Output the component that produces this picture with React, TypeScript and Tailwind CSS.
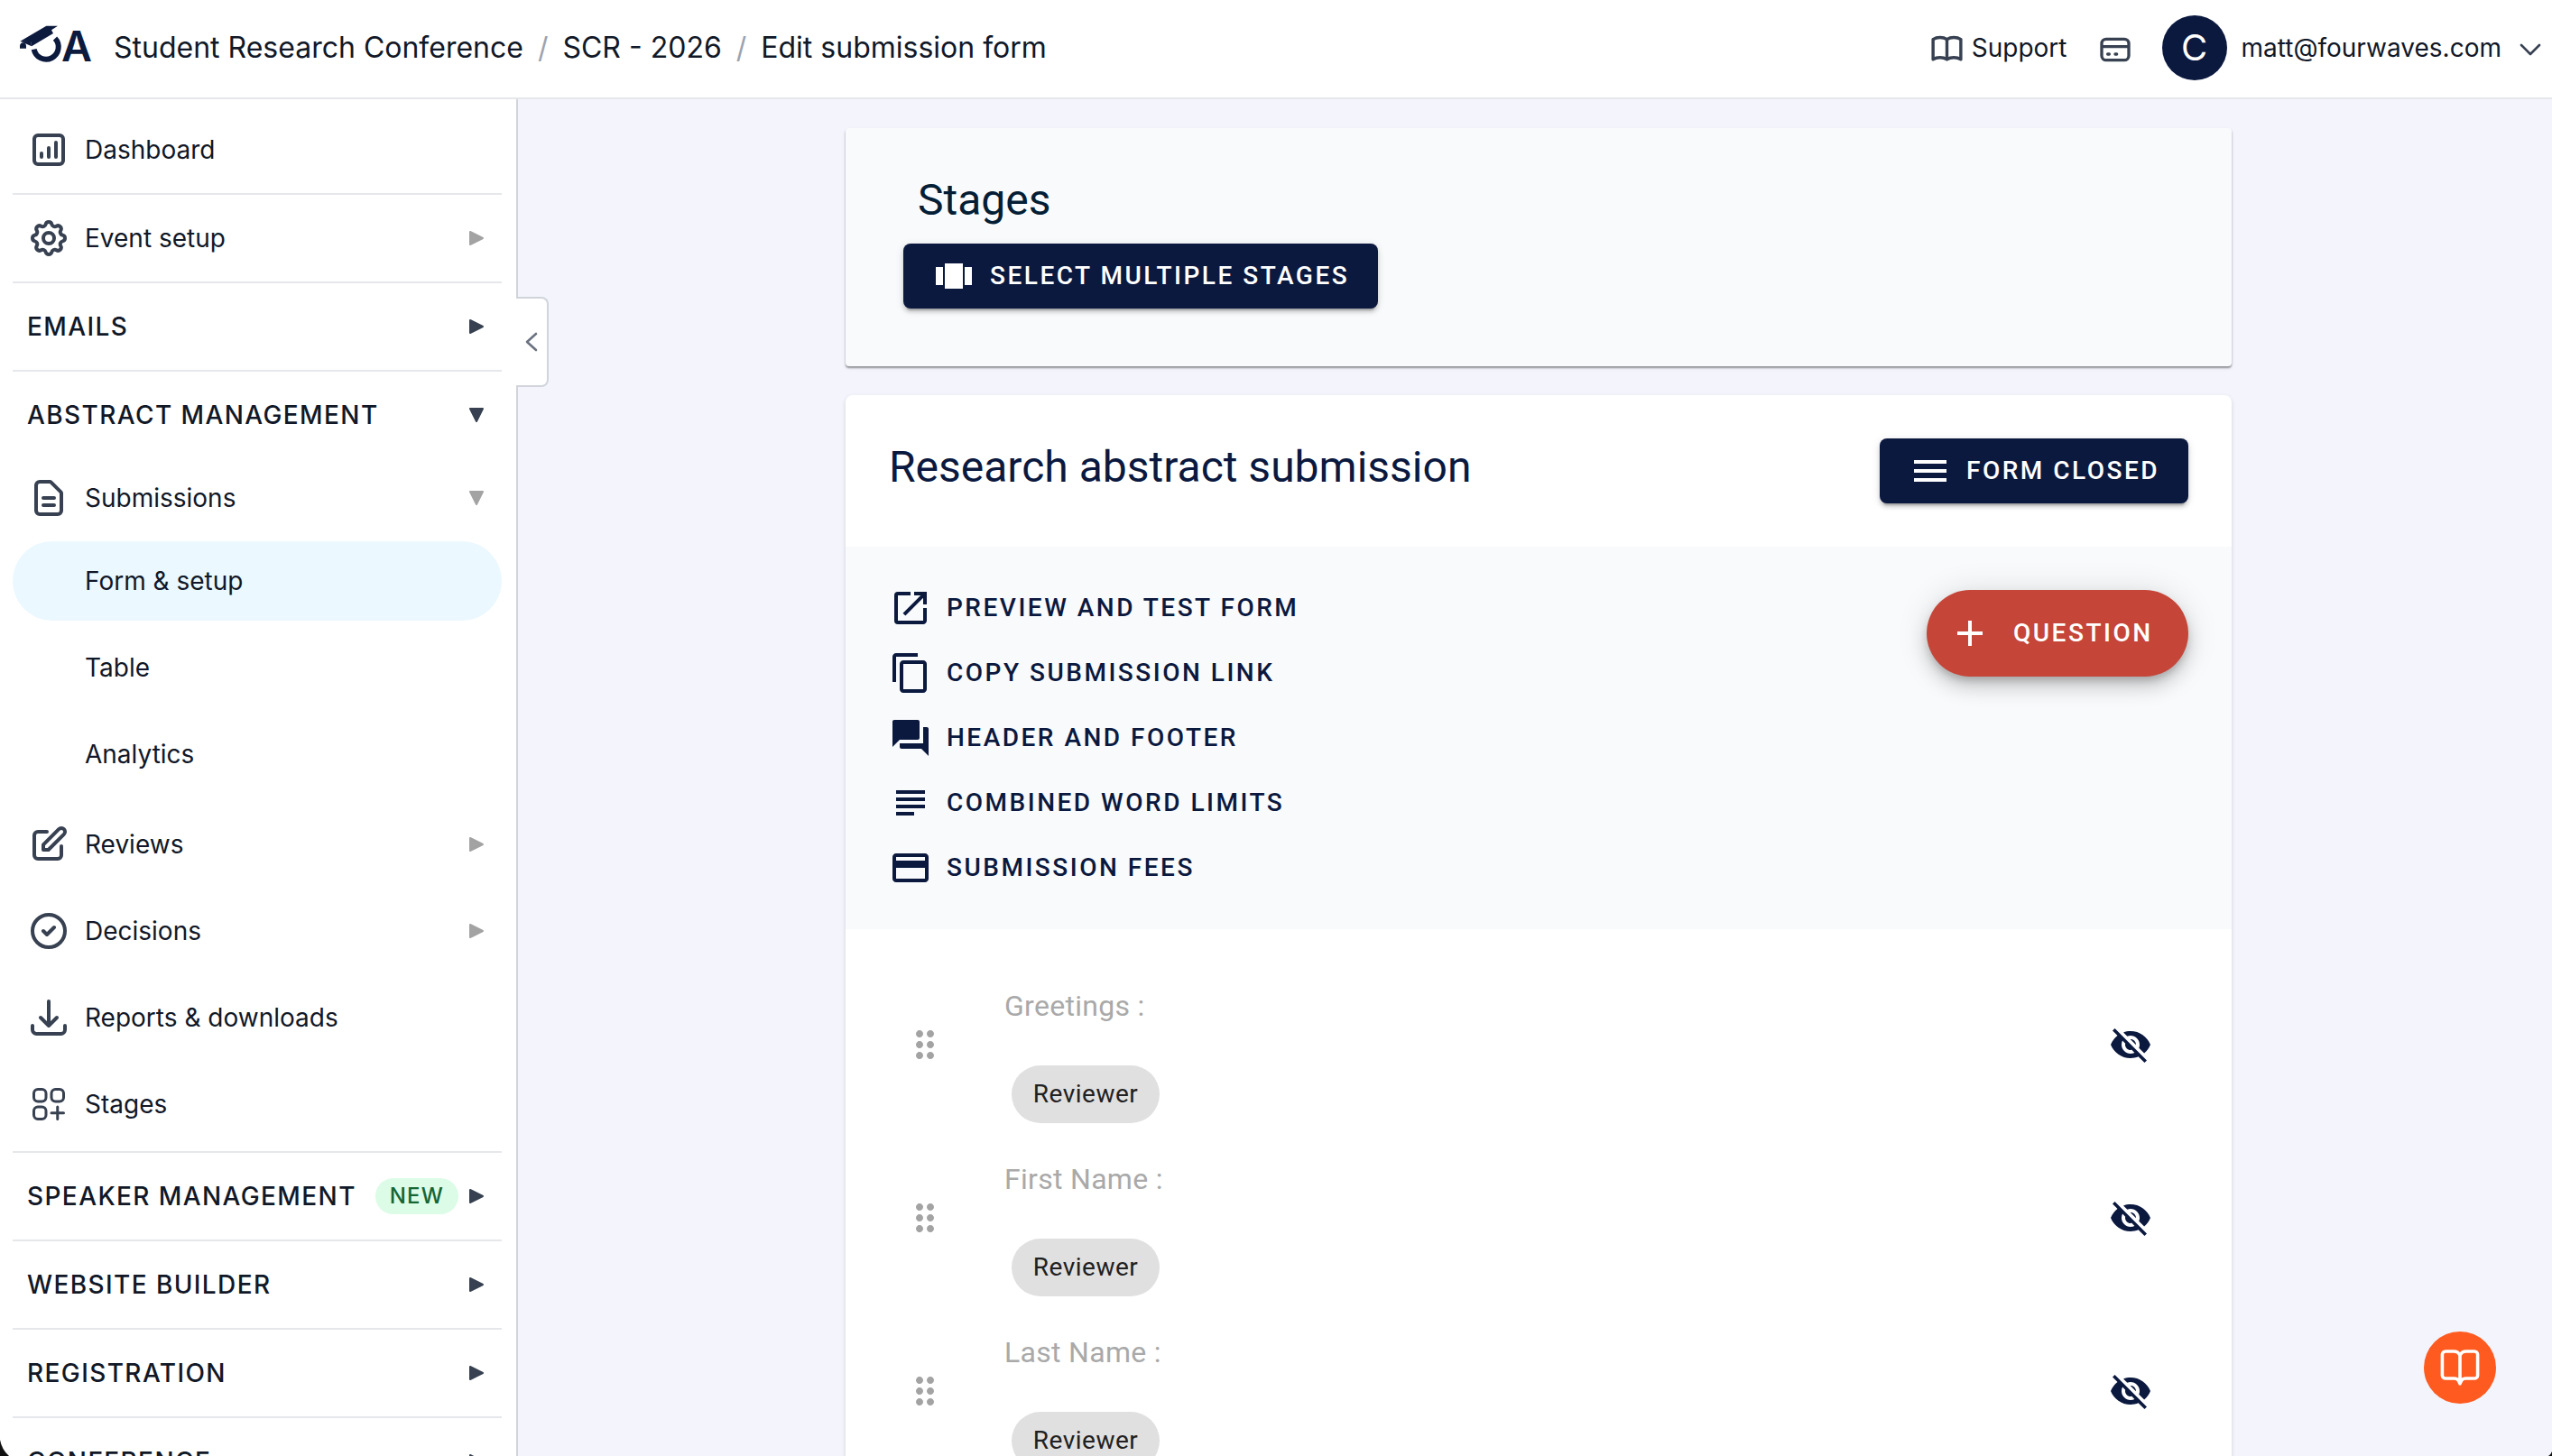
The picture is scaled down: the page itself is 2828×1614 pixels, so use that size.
import type { ReactNode } from "react";
import {
  MdAdd,
  MdContentCopy,
  MdDragIndicator,
  MdForum,
  MdMenu,
  MdOpenInNew,
  MdSubject,
  MdViewCarousel,
  MdVisibilityOff,
} from "react-icons/md";

const icons = {
  dashboard:
    "M16 8v8m-4-5v5m-4-2v2m-2 4h12a2 2 0 002-2V6a2 2 0 00-2-2H6a2 2 0 00-2 2v12a2 2 0 002 2z",
  gear: "M10.325 4.317c.426-1.756 2.924-1.756 3.35 0a1.724 1.724 0 002.573 1.066c1.543-.94 3.31.826 2.37 2.37a1.724 1.724 0 001.065 2.572c1.756.426 1.756 2.924 0 3.35a1.724 1.724 0 00-1.066 2.573c.94 1.543-.826 3.31-2.37 2.37a1.724 1.724 0 00-2.572 1.065c-.426 1.756-2.924 1.756-3.35 0a1.724 1.724 0 00-2.573-1.066c-1.543.94-3.31-.826-2.37-2.37a1.724 1.724 0 00-1.065-2.572c-1.756-.426-1.756-2.924 0-3.35a1.724 1.724 0 001.066-2.573c-.94-1.543.826-3.31 2.37-2.37.996.608 2.296.07 2.572-1.065zM15 12a3 3 0 11-6 0 3 3 0 016 0z",
  document:
    "M9 12h6m-6 4h6m2 5H7a2 2 0 01-2-2V5a2 2 0 012-2h5.586a1 1 0 01.707.293l5.414 5.414a1 1 0 01.293.707V19a2 2 0 01-2 2z",
  pencil:
    "M11 5H6a2 2 0 00-2 2v11a2 2 0 002 2h11a2 2 0 002-2v-5m-1.414-9.414a2 2 0 112.828 2.828L11.828 15H9v-2.828l8.586-8.586z",
  check: "M9 12l2 2 4-4m6 2a9 9 0 11-18 0 9 9 0 0118 0z",
  download:
    "M3 16.5v2.25A2.25 2.25 0 005.25 21h13.5A2.25 2.25 0 0021 18.75V16.5M16.5 12L12 16.5m0 0L7.5 12m4.5 4.5V3",
  stages:
    "M13.5 16.875h3.375m0 0h3.375m-3.375 0V13.5m0 3.375v3.375M6 10.5h2.25a2.25 2.25 0 002.25-2.25V6a2.25 2.25 0 00-2.25-2.25H6A2.25 2.25 0 003.75 6v2.25A2.25 2.25 0 006 10.5zm0 9.75h2.25A2.25 2.25 0 0010.5 18v-2.25a2.25 2.25 0 00-2.25-2.25H6a2.25 2.25 0 00-2.25 2.25V18A2.25 2.25 0 006 20.25zm9.75-9.75H18a2.25 2.25 0 002.25-2.25V6A2.25 2.25 0 0018 3.75h-2.25A2.25 2.25 0 0013.5 6v2.25a2.25 2.25 0 002.25 2.25z",
  book: "M12 6.253v13m0-13C10.832 5.477 9.246 5 7.5 5S4.168 5.477 3 6.253v13C4.168 18.477 5.754 18 7.5 18s3.332.477 4.5 1.253m0-13C13.168 5.477 14.754 5 16.5 5c1.747 0 3.332.477 4.5 1.253v13C19.832 18.477 18.247 18 16.5 18c-1.746 0-3.332.477-4.5 1.253",
  card: "M3 10h18M7 15h1m4 0h1m-7 4h12a3 3 0 003-3V8a3 3 0 00-3-3H6a3 3 0 00-3 3v8a3 3 0 003 3z",
};

function StrokeIcon({ d, size = 48, width = 2, className = "" }: { d: string; size?: number; width?: number; className?: string }) {
  return (
    <svg
      width={size}
      height={size}
      viewBox="0 0 24 24"
      fill="none"
      stroke="currentColor"
      strokeWidth={width}
      strokeLinecap="round"
      strokeLinejoin="round"
      className={`shrink-0 text-[#374151] ${className}`}
    >
      <path d={d} />
    </svg>
  );
}

function Caret({ down = false, muted = false }: { down?: boolean; muted?: boolean }) {
  const color = muted ? "#a3a3a3" : "#374151";
  return (
    <svg width="18" height="18" viewBox="0 0 18 18" fill={color} stroke={color} strokeWidth="2" strokeLinejoin="round" className="shrink-0">
      <path d={down ? "M2 2h14L9 16z" : "M2 2v14l14-7z"} />
    </svg>
  );
}

function Logo() {
  return (
    <svg width="110" height="70" viewBox="0 0 330 210" className="mt-4 ml-2.5 shrink-0">
      <g fill="#0c1a3e">
        <path d="M37 89L124 38h38l-21 14 6 11-72 43-3-17z" />
        <path d="M36 113v-9q1-9 11-10q9 1 10 10v9z" />
        <path d="M37 89l35-3 3 20z" />
        <text
          x="174"
          y="157"
          textLength="102"
          lengthAdjust="spacingAndGlyphs"
          className="font-['Inter'] text-[138px] font-semibold"
        >
          A
        </text>
      </g>
      <path d="M83 116A41 41 0 1 0 153 80" fill="none" stroke="#0c1a3e" strokeWidth="18" />
    </svg>
  );
}

function Header() {
  return (
    <header className="flex h-[110px] shrink-0 items-start border-b-2 border-[#e5e7eb] bg-white text-[#111827]">
      <Logo />
      <nav className="ml-1.5 flex h-[106px] items-center text-[32px]">
        <span>Student Research Conference</span>
        <span className="mx-4 text-[#9ca3af]">/</span>
        <span>SCR - 2026</span>
        <span className="mx-4 text-[#9ca3af]">/</span>
        <span>Edit submission form</span>
      </nav>
      <div className="ml-auto flex h-[106px] items-center pr-3 text-[28px]">
        <StrokeIcon d={icons.book} size={41} />
        <span className="ml-[7px]">Support</span>
        <StrokeIcon d={icons.card} size={40} className="mt-1 ml-[33px]" />
        <span className="ml-8 flex size-[72px] items-center justify-center rounded-full bg-[#0b193f] text-[40px] text-white">
          C
        </span>
        <span className="ml-4">matt@fourwaves.com</span>
        <svg width="24" height="14" viewBox="0 0 24 14" fill="none" stroke="#374151" strokeWidth="2.6" strokeLinecap="round" strokeLinejoin="round" className="mt-1 ml-5">
          <path d="M2 2l10 10L22 2" />
        </svg>
      </div>
    </header>
  );
}

function NavSection({ label, down, badge }: { label: string; down?: boolean; badge?: string }) {
  return (
    <div className="flex h-24 shrink-0 items-center pr-[19px] pl-4 text-[28px] font-medium tracking-[1.4px]">
      <span className="whitespace-nowrap">{label}</span>
      <span className="ml-auto flex items-center">
        {badge && (
          <span className="mr-[11px] flex h-10 items-center rounded-full bg-[#dcfce7] px-4 text-[24px] tracking-[1.2px] text-[#166534]">
            {badge}
          </span>
        )}
        <Caret down={down} />
      </span>
    </div>
  );
}

function NavItem({ label, icon, caret, thin, tall }: { label: string; icon?: string; caret?: "right" | "down"; thin?: boolean; tall?: boolean }) {
  return (
    <div className={`flex shrink-0 items-center pr-[19px] pl-4 text-[28px] ${tall ? "h-24" : "h-[88px]"}`}>
      {icon ? <StrokeIcon d={icon} width={thin ? 1.5 : 2} /> : <span className="w-12" />}
      <span className="ml-4">{label}</span>
      {caret && (
        <span className="ml-auto">
          <Caret down={caret === "down"} muted />
        </span>
      )}
    </div>
  );
}

function Divider() {
  return <div className="h-0.5 shrink-0 bg-[#e5e7eb]" />;
}

function Sidebar() {
  return (
    <aside className="relative w-[574px] shrink-0 border-r-2 border-[#d1d5db] bg-white text-[#111827]">
      <div className="flex h-[1504px] flex-col overflow-hidden pt-2 pr-4 pl-3.5">
        <NavItem label="Dashboard" icon={icons.dashboard} tall />
        <Divider />
        <NavItem label="Event setup" icon={icons.gear} caret="right" tall />
        <Divider />
        <NavSection label="EMAILS" />
        <Divider />
        <NavSection label="ABSTRACT MANAGEMENT" down />
        <NavItem label="Submissions" icon={icons.document} caret="down" />
        <div className="mt-1 flex shrink-0 flex-col gap-2">
          <div className="rounded-full bg-[#ebf8ff]">
            <NavItem label="Form & setup" />
          </div>
          <NavItem label="Table" />
          <NavItem label="Analytics" />
        </div>
        <div className="mt-3 mb-2 flex shrink-0 flex-col gap-2">
          <NavItem label="Reviews" icon={icons.pencil} caret="right" />
          <NavItem label="Decisions" icon={icons.check} caret="right" />
          <NavItem label="Reports & downloads" icon={icons.download} />
          <NavItem label="Stages" icon={icons.stages} thin />
        </div>
        <Divider />
        <NavSection label="SPEAKER MANAGEMENT" badge="NEW" />
        <Divider />
        <NavSection label="WEBSITE BUILDER" />
        <Divider />
        <NavSection label="REGISTRATION" />
        <Divider />
        <NavSection label="CONFERENCE" />
      </div>
      <button className="absolute top-[219px] left-[572px] flex h-[100px] w-9 items-center justify-center rounded-r-lg border-2 border-l-0 border-[#d1d5db] bg-white">
        <svg width="14" height="22" viewBox="0 0 14 22" fill="none" stroke="#6b7280" strokeWidth="2.6" strokeLinecap="round" strokeLinejoin="round">
          <path d="M12 2L2 11l10 9" />
        </svg>
      </button>
    </aside>
  );
}

const raised = "shadow-[0_6px_2px_-4px_rgba(0,0,0,0.2),0_4px_4px_rgba(0,0,0,0.14),0_2px_10px_rgba(0,0,0,0.12)]";

function NavyButton({ icon, children, className = "" }: { icon: ReactNode; children: ReactNode; className?: string }) {
  return (
    <button
      className={`flex h-[72px] items-center rounded-lg bg-[#0b193f] pl-8 text-[28px] font-medium tracking-[2.5px] whitespace-nowrap text-white ${raised} ${className}`}
    >
      {icon}
      <span className="ml-4">{children}</span>
    </button>
  );
}

function FeesIcon() {
  return (
    <svg width="48" height="48" viewBox="0 0 24 24" fill="currentColor">
      <path d="M20 4H4c-1.11 0-1.99.89-1.99 2L2 18c0 1.11.89 2 2 2h16c1.11 0 2-.89 2-2V6c0-1.11-.89-2-2-2zm0 14H4v-6h16v6zm0-10H4V6h16v2z" />
    </svg>
  );
}

const actions = [
  { label: "PREVIEW AND TEST FORM", icon: <MdOpenInNew size={48} /> },
  { label: "COPY SUBMISSION LINK", icon: <MdContentCopy size={48} /> },
  { label: "HEADER AND FOOTER", icon: <MdForum size={48} /> },
  { label: "COMBINED WORD LIMITS", icon: <MdSubject size={48} /> },
  { label: "SUBMISSION FEES", icon: <FeesIcon /> },
];

function Question({ label }: { label: string }) {
  return (
    <div className="flex h-48 items-center pr-[88px] pl-16">
      <MdDragIndicator size={48} color="#a3a3a3" />
      <div className="ml-16 flex-1 pt-5">
        <div className="text-[32px] leading-[48px] tracking-[0.3px] text-[#a9a9a9]">{label}</div>
        <span className="mt-[42px] ml-2 flex h-16 w-[164px] items-center justify-center rounded-full bg-[#e0e0e0] text-[28px] tracking-[0.5px] text-[#212121]">
          Reviewer
        </span>
      </div>
      <MdVisibilityOff size={48} color="#0b193f" />
    </div>
  );
}

function Main() {
  return (
    <main className="flex h-[1504px] flex-1 flex-col overflow-hidden bg-[#f3f4fc] pl-[363px] font-['Roboto',sans-serif]">
      <section className="mt-8 h-[264px] w-[1536px] shrink-0 rounded-sm bg-[#f9fafb] px-16 pt-12 shadow-[0_2px_2px_rgba(0,0,0,0.36),0_2px_4px_rgba(0,0,0,0.08)]">
        <h2 className="ml-4 text-[48px] leading-[64px] text-[#041e36]">Stages</h2>
        <NavyButton icon={<MdViewCarousel size={48} />} className="mt-4 w-[526px]">
          SELECT MULTIPLE STAGES
        </NavyButton>
      </section>
      <section className="mt-8 h-[1300px] w-[1536px] shrink-0 rounded-lg bg-white shadow-[0_2px_5px_rgba(0,0,0,0.14)]">
        <div className="flex h-[168px] items-center justify-between px-12">
          <h2 className="-mt-2 text-[48px] text-[#0b193f]">Research abstract submission</h2>
          <NavyButton icon={<MdMenu size={48} />} className="w-[342px]">
            FORM CLOSED
          </NavyButton>
        </div>
        <div className="flex h-[424px] items-start justify-between bg-[#f9fafb] px-12 pt-8">
          <ul>
            {actions.map((a) => (
              <li key={a.label} className="flex h-[72px] items-center text-[28px] font-medium tracking-[2.5px] text-[#0b193f]">
                {a.icon}
                <span className="ml-4">{a.label}</span>
              </li>
            ))}
          </ul>
          <button className="mt-4 flex h-24 w-[290px] items-center rounded-full bg-[#c64539] pl-6 text-[28px] font-medium tracking-[2.5px] text-white shadow-[0_6px_10px_-2px_rgba(0,0,0,0.2),0_12px_20px_rgba(0,0,0,0.14),0_2px_36px_rgba(0,0,0,0.12)]">
            <MdAdd size={48} />
            <span className="ml-6">QUESTION</span>
          </button>
        </div>
        <div className="pt-8">
          <Question label="Greetings :" />
          <Question label="First Name :" />
          <Question label="Last Name :" />
        </div>
      </section>
    </main>
  );
}

export default function App() {
  return (
    <div className="relative flex h-[1614px] w-[2828px] flex-col overflow-hidden bg-white font-['Inter',sans-serif]">
      <Header />
      <div className="flex">
        <Sidebar />
        <Main />
      </div>
      <button className="absolute top-[1476px] left-[2686px] flex size-20 items-center justify-center rounded-full bg-[#ff5a1f]">
        <svg width="48" height="48" viewBox="0 0 24 24" fill="none" stroke="white" strokeWidth="1.8" strokeLinecap="round" strokeLinejoin="round">
          <path d="M12 5.2V21M12 5.2C11.4 3.9 10.2 3 8.6 3H4a1.8 1.8 0 0 0-1.8 1.8v11.4A1.8 1.8 0 0 0 4 18h4.8c1.2 0 1.7.2 2.2 1l1 1.8 1-1.8c.5-.8 1-1 2.2-1H20a1.8 1.8 0 0 0 1.8-1.8V4.8A1.8 1.8 0 0 0 20 3h-4.600C13.800 3 12.600 3.900 12 5.200z" />
        </svg>
      </button>
      <svg width="10" height="18" viewBox="0 0 10 18" className="absolute bottom-0 left-0">
        <path d="M0 0Q2 11 10 18H0z" fill="#111" />
      </svg>
      <svg width="4" height="5" viewBox="0 0 4 5" className="absolute right-0 bottom-0">
        <path d="M4 0Q3 3 0 5h4z" fill="#111" />
      </svg>
    </div>
  );
}
